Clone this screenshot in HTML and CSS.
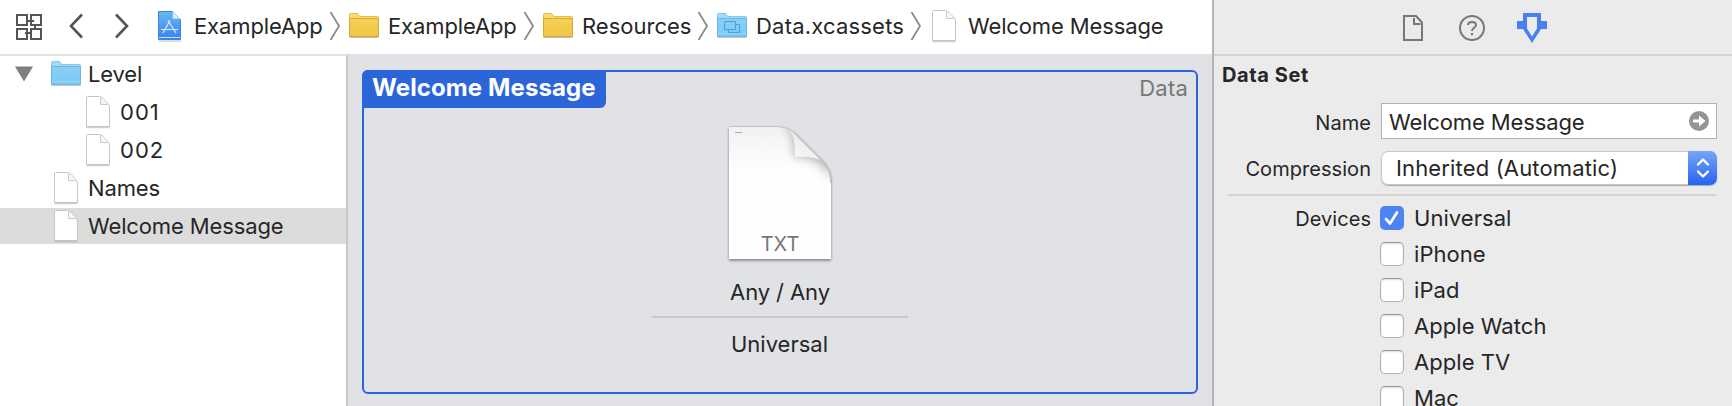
FILE: index.html
```html
<!DOCTYPE html>
<html lang="en">
<head>
<meta charset="utf-8">
<title>Data.xcassets</title>
<link rel="stylesheet" href="styles.css">
</head>
<body>
<svg width="0" height="0" class="defs">
  <defs>
    <linearGradient id="gy" x1="0" y1="0" x2="0" y2="1"><stop offset="0" stop-color="#f5d154"/><stop offset="1" stop-color="#efc544"/></linearGradient>
    <linearGradient id="gb" x1="0" y1="0" x2="0" y2="1"><stop offset="0" stop-color="#88cff5"/><stop offset="1" stop-color="#7cc9f6"/></linearGradient>
    <linearGradient id="ga" x1="0" y1="0" x2="0" y2="1"><stop offset="0" stop-color="#66b8f0"/><stop offset="1" stop-color="#3b82f4"/></linearGradient>
    <linearGradient id="gp" x1="0" y1="0" x2="0" y2="1"><stop offset="0" stop-color="#f1f1f1"/><stop offset=".28" stop-color="#fdfdfd"/><stop offset="1" stop-color="#fff"/></linearGradient>
    <linearGradient id="gc" x1="0" y1="1" x2=".6" y2=".3"><stop offset="0" stop-color="#fff"/><stop offset="1" stop-color="#e9e9e9"/></linearGradient>
    <filter id="soft" x="-50%" y="-50%" width="200%" height="200%"><feGaussianBlur stdDeviation="5"/></filter>
    <filter id="drop" x="-10%" y="-10%" width="120%" height="120%"><feGaussianBlur stdDeviation="1.4"/></filter>
    <clipPath id="page"><path d="M1 1H48C62 1 66 8 74 16L92 34C99 41 103 46 103 58V134H1Z"/></clipPath>
    <symbol id="doc" viewBox="0 0 26 34">
      <path d="M1.500 32.500H24.500" stroke="#999" opacity=".45" stroke-width="1.500"/>
      <path d="M1.500 2.500Q1.500 1.500 2.500 1.500H14.500C17 1.500 24.500 9.500 24.500 12V31.500H1.500Z" fill="#fff" stroke="#c4c4c4"/>
      <path d="M15.500 2.500V9.500H22.500" fill="#f6f6f6" stroke="#c9c9c9"/>
    </symbol>
    <symbol id="folder-y" viewBox="0 0 30 26">
      <path d="M.5 24.500H29.500" stroke="#777" opacity=".45"/>
      <path d="M.5 1.500Q.5.500 1.500.500H8Q9 .5 9.500 1.500L10.500 3.500H28.500Q29.500 3.500 29.500 4.500V23.500H.5Z" fill="#f8dc70" stroke="#e3bd48"/>
      <path d="M.5 5.500H29.500V23.500H.5Z" fill="url(#gy)" stroke="#d5a934"/>
    </symbol>
    <symbol id="folder-b" viewBox="0 0 30 26">
      <path d="M.5 24.500H29.500" stroke="#777" opacity=".4"/>
      <path d="M.5 1.500Q.5.500 1.500.500H8Q9 .5 9.500 1.500L10.500 3.500H28.500Q29.500 3.500 29.500 4.500V23.500H.5Z" fill="#9fdbf9" stroke="#84c8ee"/>
      <path d="M.5 5.500H29.500V23.500H.5Z" fill="url(#gb)" stroke="#6ab7e3"/>
      <path d="M1 20.500H29" stroke="#98d7fa"/>
    </symbol>
    <symbol id="sep" viewBox="0 0 12 28"><path d="M1.500 0L10 14L1.500 28" fill="none" stroke="#8a8a8a" stroke-width="1.800"/></symbol>
  </defs>
</svg>
<div class="window">
  <div class="main">
    <nav class="jumpbar">
      <svg class="grid-icon" width="26" height="26" viewBox="0 0 26 26" fill="none" stroke="#555" stroke-width="2"><path d="M1 1H11V11H1ZM15 1H25V11H15ZM1 15H11V25H1ZM15 15H25V25H15ZM11 7H18M19 11V15M15 19H9"/></svg>
      <svg class="back" width="14" height="26" viewBox="0 0 14 26" fill="none" stroke="#555" stroke-width="2.600"><path d="M13 1.500L2 13L13 24.500"/></svg>
      <svg class="forward" width="14" height="26" viewBox="0 0 14 26" fill="none" stroke="#555" stroke-width="2.600"><path d="M1 1.500L12 13L1 24.500"/></svg>
      <div class="crumb crumb-project">
        <svg width="24" height="32" viewBox="0 0 24 32"><path d="M1 31H23" stroke="#777" opacity=".5"/><path d="M.5 1.500H14L22.500 9.500V29.500H.5Z" fill="url(#ga)" stroke="#3c85dc"/><path d="M14.500 1.500V9H22" fill="#d9ecfb" stroke="#6aaee8" stroke-width=".7"/><path d="M1 27.500H22" stroke="#c5defa"/><path d="M3 19.500H20M12 10.500L5 23M10 10.500L18 23" stroke="#d5eafc" stroke-width="1.200" fill="none"/></svg>
        <span class="snug">ExampleApp</span>
        <svg class="sep" width="12" height="28"><use href="#sep"/></svg>
      </div>
      <div class="crumb crumb-group">
        <svg width="30" height="26"><use href="#folder-y"/></svg>
        <span class="snug">ExampleApp</span>
        <svg class="sep" width="12" height="28"><use href="#sep"/></svg>
      </div>
      <div class="crumb crumb-resources">
        <svg width="30" height="26"><use href="#folder-y"/></svg>
        <span>Resources</span>
        <svg class="sep" width="12" height="28"><use href="#sep"/></svg>
      </div>
      <div class="crumb crumb-catalog">
        <svg width="30" height="26" viewBox="0 0 30 26"><use href="#folder-b"/><path d="M11.500 17V19.500H22.500V11.500H18.500M7.500 8.500H18.500V16.500H7.500Z" fill="none" stroke="#4d9fd8"/></svg>
        <span class="wide">Data.xcassets</span>
        <svg class="sep" width="12" height="28"><use href="#sep"/></svg>
      </div>
      <div class="crumb crumb-item">
        <svg width="26" height="34"><use href="#doc"/></svg>
        <span class="snug">Welcome Message</span>
      </div>
    </nav>
    <div class="workspace">
      <aside class="sidebar">
        <div class="row row-folder">
          <svg class="disclosure" width="18" height="16"><path d="M0 .5H18L9 15.500Z" fill="#7f7f7f"/></svg>
          <svg width="30" height="26"><use href="#folder-b"/></svg><span>Level</span>
        </div>
        <div class="row row-child"><svg width="26" height="34"><use href="#doc"/></svg><span>001</span></div>
        <div class="row row-child"><svg width="26" height="34"><use href="#doc"/></svg><span>002</span></div>
        <div class="row"><svg width="26" height="34"><use href="#doc"/></svg><span class="snug">Names</span></div>
        <div class="row selected"><svg width="26" height="34"><use href="#doc"/></svg><span class="snug">Welcome Message</span></div>
      </aside>
      <section class="canvas">
        <div class="card">
          <header class="card-head">
            <h1 class="card-title"><span>Welcome Message</span></h1>
            <span class="card-kind">Data</span>
          </header>
          <div class="slot">
            <svg class="txt-file" width="110" height="142" viewBox="-3 -1 110 142">
              <path d="M1 3H48C62 3 66 8 74 16L92 34C99 41 103 46 103 58V135.500H1Z" fill="#000" opacity=".45" filter="url(#drop)"/>
              <path d="M1 1H48C62 1 66 8 74 16L92 34C99 41 103 46 103 58V134H1Z" fill="url(#gp)"/>
              <g clip-path="url(#page)"><path d="M54 0C64 4 66 14 66 32C84 32 94 38 104 54V20L70 0Z" fill="#666" opacity=".45" filter="url(#soft)"/></g>
              <path d="M56 2.500C66 7 67 15 67 32C79 31 87 32 93.500 35.500L74 16C68 10 65 5 56 2.500Z" fill="url(#gc)"/>
              <path d="M1.500 1.500H48C62 1.500 66 8 74 16L92 34C99 41 102.500 46 102.500 58" fill="none" stroke="#bbb" stroke-width=".9"/>
              <path d="M7 7.500H14" stroke="#aaa"/>
              <text x="52" y="126" class="txt-label">TXT</text>
            </svg>
            <p class="slot-name">Any / Any</p>
            <hr class="slot-rule">
            <p class="slot-device">Universal</p>
          </div>
        </div>
      </section>
    </div>
  </div>
  <aside class="inspector">
    <div class="tabs">
      <svg width="20" height="26" viewBox="0 0 20 26" fill="none" stroke="#777" stroke-width="2"><path d="M1 1H13L19 7.500V25H1Z"/><path d="M11 3V9H17.500"/></svg>
      <svg class="help-tab" width="26" height="26" viewBox="0 0 26 26" fill="none" stroke="#777" stroke-width="2"><circle cx="13" cy="13" r="12"/><path d="M9 10C9 6 17 6 17 10C17 13 13 12.500 13 16"/><path d="M13 18V20.200"/></svg>
      <svg class="attr-tab" width="30" height="30" viewBox="0 0 30 30"><path fill-rule="evenodd" fill="#4a7ff0" d="M6 0H24V8H30V16H24L15 30L6 16H0V8H6ZM10 4V15.500L15 23.500L20 15.500V4Z"/></svg>
    </div>
    <h2 class="section-title">Data Set</h2>
    <div class="field">
      <label class="small">Name</label>
      <div class="input"><span class="snug">Welcome Message</span>
        <svg width="20" height="20" viewBox="0 0 20 20"><circle cx="10" cy="10" r="10" fill="#949494"/><path d="M4 8.500H10V4.500L16.500 10L10 15.500V11.500H4Z" fill="#fff"/></svg>
      </div>
    </div>
    <div class="field field-select">
      <label class="small">Compression</label>
      <div class="select"><span>Inherited (Automatic)</span>
        <div class="stepper"><svg width="14" height="22" viewBox="0 0 14 22" fill="none" stroke="#fff" stroke-width="2.300" stroke-linecap="round" stroke-linejoin="round"><path d="M2 7.500L7 2.500L12 7.500M2 14.500L7 19.500L12 14.500"/></svg></div>
      </div>
    </div>
    <hr class="rule">
    <div class="devices">
      <label class="small">Devices</label>
      <ul class="options">
        <li><i class="box checked"><svg width="24" height="24" viewBox="0 0 24 24" fill="none" stroke="#fff" stroke-width="2.700" stroke-linecap="round" stroke-linejoin="round"><path d="M6 13L10 17.500L17 6.500"/></svg></i><span>Universal</span></li>
        <li><i class="box"></i><span>iPhone</span></li>
        <li><i class="box"></i><span>iPad</span></li>
        <li><i class="box"></i><span>Apple Watch</span></li>
        <li><i class="box"></i><span>Apple TV</span></li>
        <li><i class="box"></i><span>Mac</span></li>
      </ul>
    </div>
  </aside>
</div>
</body>
</html>
```
FILE: styles.css
```css
* { box-sizing: border-box; margin: 0; padding: 0; }
body { font: 22px/28px Inter, "Liberation Sans", sans-serif; color: #262626; background: #fff; letter-spacing: 0; overflow: hidden; }
.snug { letter-spacing: -.12px; }
.wide { letter-spacing: .2px; }
.defs { position: absolute; }
svg { display: block; flex: none; }
span, label, p { white-space: nowrap; }
hr { border: 0; }
.window { display: flex; width: 1732px; height: 406px; overflow: hidden; }
.main { width: 1212px; display: flex; flex-direction: column; }

.jumpbar { height: 54px; display: flex; align-items: center; padding: 0 0 2px 16px; }
.grid-icon { margin-top: 2px; }
.back { margin-left: 27px; }
.forward { margin-left: 32px; }
.crumb { display: flex; align-items: center; padding-right: 8px; }
.crumb .sep { margin-left: auto; }
.crumb-project { width: 191px; margin-left: 29px; }
.crumb-project span { margin-left: 12px; }
.crumb-group { width: 194px; }
.crumb-resources { width: 174px; }
.crumb-catalog { width: 213px; }
.crumb-group span, .crumb-resources span, .crumb-catalog span { margin-left: 9px; }
.crumb-item { margin-left: 1px; }
.crumb-item span { margin-left: 11px; }

.workspace { flex: 1; display: flex; min-height: 0; }
.sidebar { width: 348px; border-top: 2px solid #e2e2e2; border-right: 2px solid #c8c8c8; display: flex; flex-direction: column; gap: 2px; }
.row { height: 36px; flex: none; display: flex; align-items: center; padding-left: 53px; }
.row span { margin-left: 9px; }
.row-folder { padding-left: 15px; }
.row-folder svg + svg { margin-left: 18px; }
.row-folder span { margin-left: 7px; letter-spacing: -.15px; }
.row-child { padding-left: 85px; letter-spacing: 1px; }
.row-child span { margin-left: 9px; }
.selected { background: #dcdcdc; }

.canvas { flex: 1; background: #e1e2e6; padding: 16px 14px 12px; }
.card { height: 324px; border: 2px solid #2b65d9; border-radius: 6px; }
.card-head { display: flex; justify-content: space-between; }
.card-title { margin: -2px 0 0 -2px; width: 244px; height: 38px; background: #2b65d9; border-radius: 6px 0 6px 0; color: #fff; font-size: 24px; line-height: 28px; font-weight: 700; letter-spacing: .1px; padding: 4px 0 0 10px; }
.card-kind { color: #777; padding: 2px 8px 0 0; letter-spacing: .2px; }
.slot { display: flex; flex-direction: column; align-items: center; }
.txt-file { margin-top: 16px; }
.txt-label { font-size: 20px; fill: #777; text-anchor: middle; }
.slot-name { margin-top: 12px; letter-spacing: -.1px; }
.slot-rule { width: 256px; height: 2px; background: #c8c9cd; margin-top: 10px; }
.slot-device { margin-top: 12px; padding-right: 1px; }

.inspector { flex: 1; background: #ebebeb; border-left: 2px solid #b3b3b3; }
.tabs { height: 56px; border-bottom: 2px solid #d3d3d3; display: flex; align-items: flex-start; padding: 15px 0 0 189px; }
.help-tab { margin-left: 36px; }
.attr-tab { margin: -2px 0 0 32px; }
.section-title { font-size: 20px; line-height: 28px; font-weight: 700; margin: 5px 0 0 8px; letter-spacing: .6px; }
.small { font-size: 20px; width: 157px; text-align: right; letter-spacing: .05px; }
.field { display: flex; margin-top: 14px; }
.field .small { padding-top: 6px; }
.input { margin-left: 10px; width: 336px; height: 36px; background: #fff; border: 1px solid #b1b1b1; display: flex; align-items: center; justify-content: space-between; padding: 0 7px; }
.input span { padding-top: 2px; }
.field-select { margin-top: 12px; }
.field-select .small { padding-top: 4px; }
.select { margin-left: 10px; width: 336px; height: 34px; background: #fff; border-radius: 7px; box-shadow: 0 0 0 1px #c6c6c6 inset, 0 1px 1px #aaa; display: flex; justify-content: space-between; overflow: hidden; padding-left: 15px; }
.select span { padding-top: 3px; letter-spacing: .15px; }
.stepper { width: 29px; display: flex; align-items: center; justify-content: center; background: linear-gradient(#76a5f7, #2563f2); }
.rule { height: 2px; margin: 9px 16px 0 14px; background: #d3d3d3; }
.devices { display: flex; padding-top: 8px; }
.devices .small { padding-top: 1px; }
.options { list-style: none; margin-left: 9px; }
.options li { height: 36px; display: flex; align-items: flex-start; }
.options span { margin-left: 10px; letter-spacing: .05px; }
.box { width: 24px; height: 24px; margin-top: 2px; flex: none; border-radius: 5px; background: #fff; border: 1px solid #b2b2b2; border-top-color: #999; box-shadow: inset 0 1px 2px #ddd; }
.box.checked { border: 0; background: #4d84f3; box-shadow: none; }
```
